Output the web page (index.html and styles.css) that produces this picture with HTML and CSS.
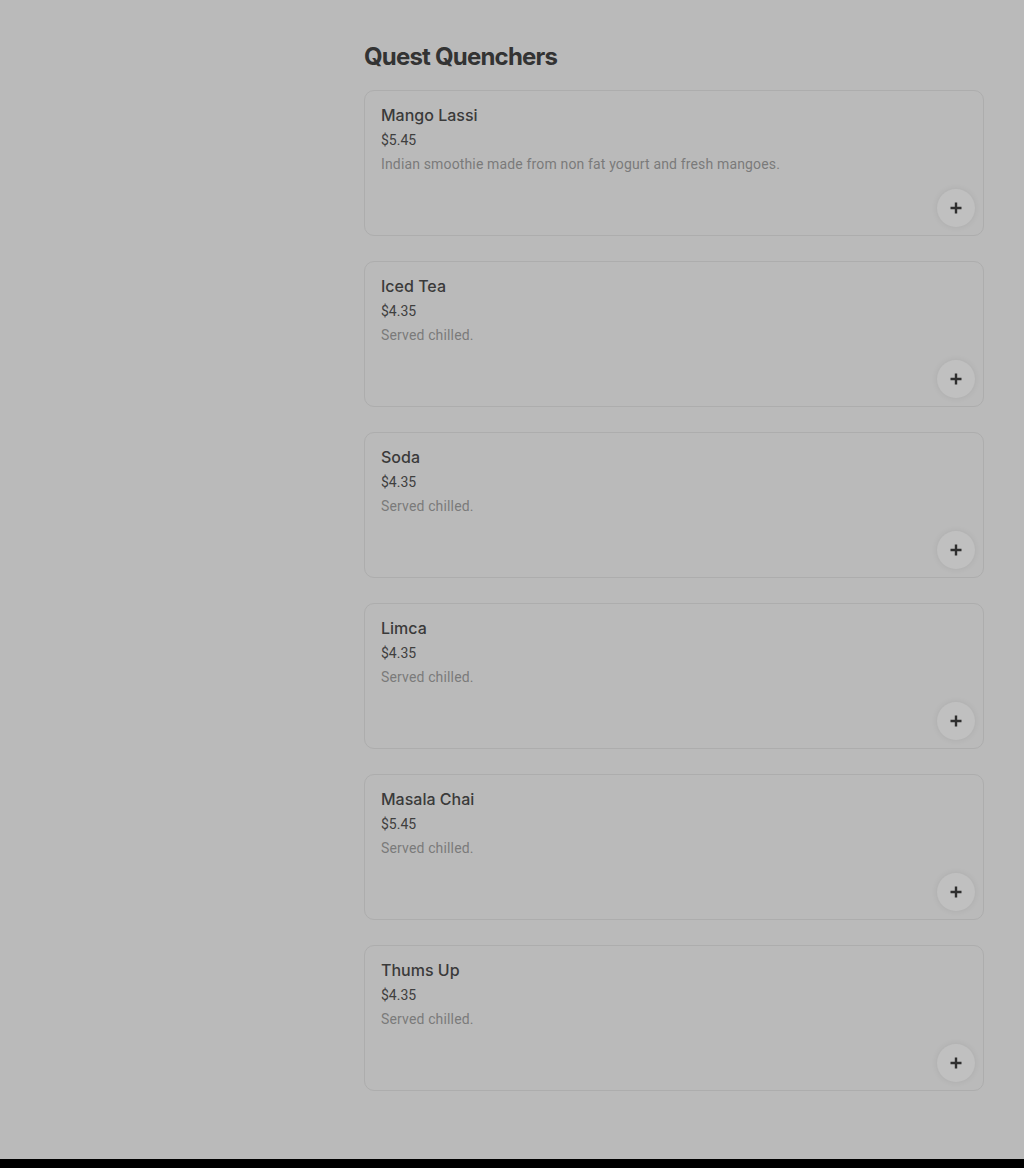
FILE: index.html
```html
<!DOCTYPE html>
<html lang="en">
<head>
<meta charset="utf-8">
<title>Quest Quenchers</title>
<link rel="stylesheet" href="styles.css">
</head>
<body>
<main class="page">
  <h2 class="section-title">Quest Quenchers</h2>
  <ul class="items">
    <li class="item">
      <h3 class="item-name">Mango Lassi</h3>
      <div class="item-price">$5.45</div>
      <p class="item-desc">Indian smoothie made from non fat yogurt and fresh mangoes.</p>
      <button class="add-btn" aria-label="Add"><svg viewBox="0 0 12 12" width="12" height="12"><path d="M6 0.5v11M0.5 6h11" stroke="#2f2f2f" stroke-width="2.4" fill="none"/></svg></button>
    </li>
    <li class="item">
      <h3 class="item-name">Iced Tea</h3>
      <div class="item-price">$4.35</div>
      <p class="item-desc">Served chilled.</p>
      <button class="add-btn" aria-label="Add"><svg viewBox="0 0 12 12" width="12" height="12"><path d="M6 0.5v11M0.5 6h11" stroke="#2f2f2f" stroke-width="2.4" fill="none"/></svg></button>
    </li>
    <li class="item">
      <h3 class="item-name">Soda</h3>
      <div class="item-price">$4.35</div>
      <p class="item-desc">Served chilled.</p>
      <button class="add-btn" aria-label="Add"><svg viewBox="0 0 12 12" width="12" height="12"><path d="M6 0.5v11M0.5 6h11" stroke="#2f2f2f" stroke-width="2.4" fill="none"/></svg></button>
    </li>
    <li class="item">
      <h3 class="item-name">Limca</h3>
      <div class="item-price">$4.35</div>
      <p class="item-desc">Served chilled.</p>
      <button class="add-btn" aria-label="Add"><svg viewBox="0 0 12 12" width="12" height="12"><path d="M6 0.5v11M0.5 6h11" stroke="#2f2f2f" stroke-width="2.4" fill="none"/></svg></button>
    </li>
    <li class="item">
      <h3 class="item-name">Masala Chai</h3>
      <div class="item-price">$5.45</div>
      <p class="item-desc">Served chilled.</p>
      <button class="add-btn" aria-label="Add"><svg viewBox="0 0 12 12" width="12" height="12"><path d="M6 0.5v11M0.5 6h11" stroke="#2f2f2f" stroke-width="2.4" fill="none"/></svg></button>
    </li>
    <li class="item">
      <h3 class="item-name">Thums Up</h3>
      <div class="item-price">$4.35</div>
      <p class="item-desc">Served chilled.</p>
      <button class="add-btn" aria-label="Add"><svg viewBox="0 0 12 12" width="12" height="12"><path d="M6 0.5v11M0.5 6h11" stroke="#2f2f2f" stroke-width="2.4" fill="none"/></svg></button>
    </li>
  </ul>
</main>
<footer class="footer"></footer>
</body>
</html>
```

FILE: styles.css
```css
* { box-sizing: border-box; }
html, body {
  margin: 0;
  padding: 0;
  background: #bababa;
}
body {
  font-family: Roboto, "Liberation Sans", sans-serif;
  color: #3a3a3a;
  min-height: 1168px;
  display: flex;
  flex-direction: column;
}
.page {
  padding: 41px 40px 67px 364px;
  flex: 1;
}
.section-title {
  margin: 0 0 17px;
  font-family: Inter, "Liberation Sans", sans-serif;
  font-size: 24px;
  line-height: 32px;
  font-weight: 700;
  letter-spacing: -0.8px;
  color: #333333;
}
.items {
  list-style: none;
  margin: 0;
  padding: 0;
  display: flex;
  flex-direction: column;
  gap: 25px;
}
.item {
  height: 146px;
  border: 1px solid #adadad;
  border-radius: 10px;
  padding: 12px 8px 8px 16px;
  display: flex;
  flex-direction: column;
  background: #bababa;
}
.item-name {
  margin: 0;
  font-family: Inter, Roboto, "Liberation Sans", sans-serif;
  font-size: 16px;
  line-height: 24px;
  font-weight: 500;
  color: #3a3a3a;
}
.item-price {
  margin-top: 1px;
  font-size: 14px;
  line-height: 24px;
  color: #3f3f3f;
}
.item-desc {
  margin: 0;
  font-size: 14px;
  line-height: 24px;
  letter-spacing: 0.15px;
  color: #7a7a7a;
}
.add-btn {
  margin-top: auto;
  align-self: flex-end;
  width: 38px;
  height: 38px;
  border-radius: 50%;
  border: none;
  padding: 0;
  background: #c0c0c0;
  box-shadow: 0 0 6px rgba(0, 0, 0, 0.08);
  display: flex;
  align-items: center;
  justify-content: center;
  cursor: pointer;
}
.footer {
  height: 9px;
  background: #000;
}
```
